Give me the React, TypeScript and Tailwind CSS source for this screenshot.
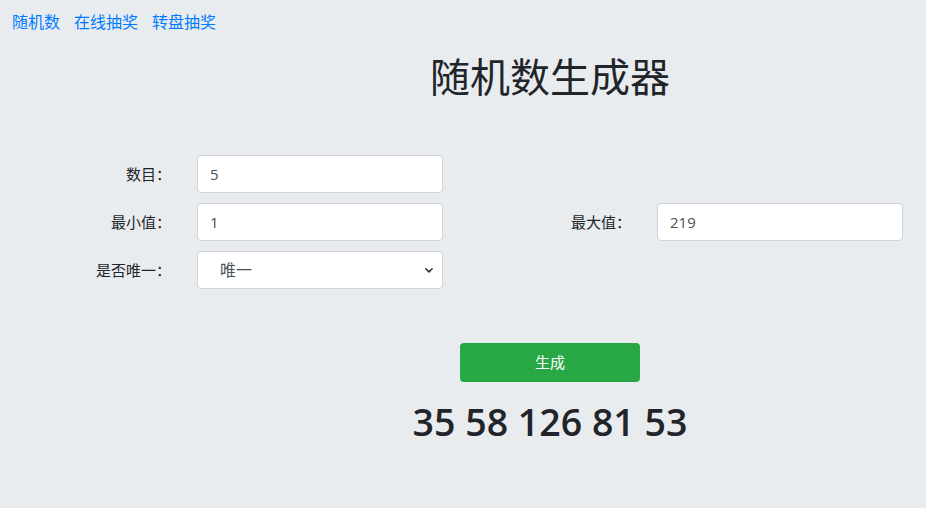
import React from "react";

const cjk = { fontFamily: '"Open Sans", "Noto Sans CJK SC", sans-serif' };

function Row({ label, children }: { label: string; children: React.ReactNode }) {
  return (
    <div className="flex items-center h-[38px]">
      <div className="w-[171px] text-right text-[15px] text-[#212529]">{label}</div>
      <div className="ml-[26px] w-[246px]">{children}</div>
    </div>
  );
}

function Input({ value }: { value: string }) {
  return (
    <div className="h-[38px] w-full bg-white border border-[#ced4da] rounded-[4px] flex items-center px-[12px] text-[15px] text-[#495057]">
      {value}
    </div>
  );
}

export default function App() {
  return (
    <div className="w-[926px] h-[508px] bg-[#e9ecef] overflow-hidden" style={cjk}>
      <div className="flex gap-[14px] pl-[12px] pt-[10px] text-[16px] text-[#007bff] leading-[24px]">
        <span>随机数</span>
        <span>在线抽奖</span>
        <span>转盘抽奖</span>
      </div>
      <div className="pl-[174px] text-center mt-[17px]">
        <h1 className="text-[40px] leading-[52px] text-[#212529]">随机数生成器</h1>
      </div>
      <div className="mt-[52px] flex">
        <div className="w-[460px] flex flex-col gap-[10px]">
          <Row label="数目：">
            <Input value="5" />
          </Row>
          <Row label="最小值：">
            <Input value="1" />
          </Row>
          <Row label="是否唯一：">
            <div className="h-[38px] w-full bg-white border border-[#ced4da] rounded-[4px] flex items-center pl-[22px] pr-[8px] text-[16px] text-[#495057] justify-between">
              <span>唯一</span>
              <svg width="10" height="10" viewBox="0 0 16 16" fill="none" stroke="#333" strokeWidth="2.5" strokeLinecap="round" strokeLinejoin="round">
                <path d="M3 6l5 5 5-5" />
              </svg>
            </div>
          </Row>
        </div>
        <div className="w-[466px] flex flex-col pt-[48px]">
          <Row label="最大值：">
            <Input value="219" />
          </Row>
        </div>
      </div>
      <div className="pl-[174px] flex flex-col items-center mt-[54px]">
        <div className="w-[180px] h-[39px] bg-[#28a745] rounded-[4px] flex items-center justify-center text-white text-[15px]">
          生成
        </div>
        <div className="mt-[16px] text-[37.5px] font-semibold text-[#212529] leading-[48px]">35 58 126 81 53</div>
      </div>
    </div>
  );
}
